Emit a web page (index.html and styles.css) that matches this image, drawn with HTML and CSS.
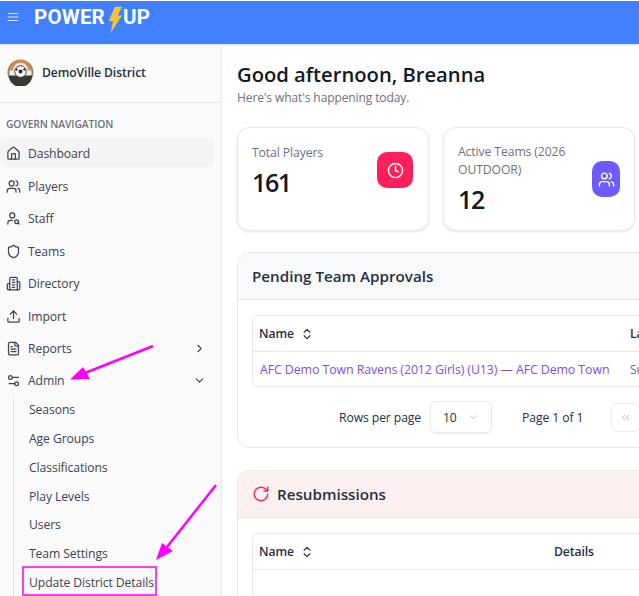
FILE: index.html
```html
<!DOCTYPE html>
<html>
<head>
  <link rel="stylesheet" href="styles.css">
</head>

<body>
  <svg width="0" height="0" class="defs">
    <symbol id="i-house" viewBox="0 0 24 24"><path d="M15 21v-8a1 1 0 0 0-1-1h-4a1 1 0 0 0-1 1v8"/><path d="M3 10a2 2 0 0 1 .709-1.528l7-5.999a2 2 0 0 1 2.582 0l7 5.999A2 2 0 0 1 21 10v9a2 2 0 0 1-2 2H5a2 2 0 0 1-2-2z"/></symbol>
    <symbol id="i-users" viewBox="0 0 24 24"><path d="M16 21v-2a4 4 0 0 0-4-4H6a4 4 0 0 0-4 4v2"/><circle cx="9" cy="7" r="4"/><path d="M22 21v-2a4 4 0 0 0-3-3.87"/><path d="M16 3.13a4 4 0 0 1 0 7.75"/></symbol>
    <symbol id="i-staff" viewBox="0 0 24 24"><circle cx="10" cy="7" r="4"/><path d="M10.3 15H7a4 4 0 0 0-4 4v2"/><circle cx="17" cy="17" r="3"/><path d="m21 21-1.9-1.9"/></symbol>
    <symbol id="i-shield" viewBox="0 0 24 24"><path d="M20 13c0 5-3.5 7.5-7.66 8.95a1 1 0 0 1-.67-.01C7.5 20.5 4 18 4 13V6a1 1 0 0 1 1-1c2 0 4.5-1.2 6.24-2.72a1.17 1.17 0 0 1 1.52 0C14.51 3.81 17 5 19 5a1 1 0 0 1 1 1z"/></symbol>
    <symbol id="i-building" viewBox="0 0 24 24"><path d="M6 22V4a2 2 0 0 1 2-2h8a2 2 0 0 1 2 2v18Z"/><path d="M6 12H4a2 2 0 0 0-2 2v6a2 2 0 0 0 2 2h2"/><path d="M18 9h2a2 2 0 0 1 2 2v9a2 2 0 0 1-2 2h-2"/><path d="M10 6h4"/><path d="M10 10h4"/><path d="M10 14h4"/><path d="M10 18h4"/></symbol>
    <symbol id="i-upload" viewBox="0 0 24 24"><path d="M21 15v4a2 2 0 0 1-2 2H5a2 2 0 0 1-2-2v-4"/><polyline points="17 8 12 3 7 8"/><line x1="12" x2="12" y1="3" y2="15"/></symbol>
    <symbol id="i-file" viewBox="0 0 24 24"><path d="M15 2H6a2 2 0 0 0-2 2v16a2 2 0 0 0 2 2h12a2 2 0 0 0 2-2V7Z"/><path d="M14 2v4a2 2 0 0 0 2 2h4"/><path d="M10 9H8"/><path d="M16 13H8"/><path d="M16 17H8"/></symbol>
    <symbol id="i-settings" viewBox="0 0 24 24"><path d="M20 7h-9"/><path d="M14 17H5"/><circle cx="17" cy="17" r="3"/><circle cx="7" cy="7" r="3"/></symbol>
    <symbol id="i-sort" viewBox="0 0 24 24"><path d="m7 15 5 5 5-5"/><path d="m7 9 5-5 5 5"/></symbol>
  </svg>

  <header class="topbar">
    <svg class="menu-icon" viewBox="0 0 24 24"><path d="M3 6h18M3 12h18M3 18h18"/></svg>
    <div class="logo">
      <span>POWER</span>
      <svg class="bolt" viewBox="0 0 18 30"><path d="M10 0h8l-5 10h5L5 30l3-14H3z"/></svg>
      <span>UP</span>
    </div>
  </header>

  <div class="layout">
    <aside class="sidebar">
      <div class="district">
        <svg class="crest" viewBox="0 0 28 28">
          <circle cx="14" cy="14" r="13.5" fill="#8a8782"/>
          <circle cx="14" cy="14" r="11.5" fill="#f1efe9"/>
          <path d="M3 12a11 11 0 0 1 22 0h-3a8 8 0 0 0-16 0z" fill="#e08a3c"/>
          <path d="M2 17h24a12 12 0 0 1-24 0z" fill="#3a3835"/>
          <circle cx="14" cy="13" r="6" fill="#f7f7f5" stroke="#45423f"/>
          <circle cx="14" cy="13" r="2" fill="#2a2a2a"/>
          <circle cx="10" cy="11" r="1.2" fill="#2a2a2a"/>
          <circle cx="18" cy="11" r="1.2" fill="#2a2a2a"/>
        </svg>
        <span>DemoVille District</span>
      </div>

      <div class="nav-title">GOVERN NAVIGATION</div>
      <nav class="nav">
        <a class="nav-item active"><svg class="icon"><use href="#i-house"/></svg>Dashboard</a>
        <a class="nav-item"><svg class="icon"><use href="#i-users"/></svg>Players</a>
        <a class="nav-item"><svg class="icon"><use href="#i-staff"/></svg>Staff</a>
        <a class="nav-item"><svg class="icon"><use href="#i-shield"/></svg>Teams</a>
        <a class="nav-item"><svg class="icon"><use href="#i-building"/></svg>Directory</a>
        <a class="nav-item"><svg class="icon"><use href="#i-upload"/></svg>Import</a>
        <a class="nav-item"><svg class="icon"><use href="#i-file"/></svg>Reports
          <svg class="caret" viewBox="0 0 24 24"><path d="m9 18 6-6-6-6"/></svg></a>
        <a class="nav-item"><svg class="icon"><use href="#i-settings"/></svg>Admin
          <svg class="caret" viewBox="0 0 24 24"><path d="m6 9 6 6 6-6"/></svg></a>
      </nav>
      <div class="subnav">
        <a>Seasons</a>
        <a>Age Groups</a>
        <a>Classifications</a>
        <a>Play Levels</a>
        <a>Users</a>
        <a>Team Settings</a>
        <a>Update District Details</a>
      </div>
    </aside>

    <main class="main">
      <h1>Good afternoon, Breanna</h1>
      <p class="lead">Here's what's happening today.</p>

      <div class="stats">
        <div class="stat">
          <div class="stat-text">
            <div class="stat-label">Total Players</div>
            <div class="stat-value">161</div>
          </div>
          <div class="stat-icon red">
            <svg viewBox="0 0 24 24"><circle cx="12" cy="12" r="10"/><polyline points="12 6 12 12 16 14"/></svg>
          </div>
        </div>
        <div class="stat center">
          <div class="stat-text">
            <div class="stat-label">Active Teams (2026 OUTDOOR)</div>
            <div class="stat-value">12</div>
          </div>
          <div class="stat-icon violet">
            <svg viewBox="0 0 24 24"><use href="#i-users"/></svg>
          </div>
        </div>
      </div>

      <section class="panel">
        <div class="panel-head">Pending Team Approvals</div>
        <div class="panel-body">
          <div class="table">
            <div class="row head">
              <div class="col-approve">Name <svg class="sort"><use href="#i-sort"/></svg></div>
              <div>Last Updated</div>
            </div>
            <div class="row">
              <div class="col-approve"><a class="team-link">AFC Demo Town Ravens (2012 Girls) (U13) — AFC Demo Town</a></div>
              <div class="muted">Submitted</div>
            </div>
          </div>
          <div class="pager">
            <span class="rows-label">Rows per page</span>
            <div class="select">10 <svg viewBox="0 0 24 24"><path d="m6 9 6 6 6-6"/></svg></div>
            <span class="page-no">Page 1 of 1</span>
            <div class="page-btn"><svg viewBox="0 0 24 24"><path d="m11 17-5-5 5-5"/><path d="m18 17-5-5 5-5"/></svg></div>
          </div>
        </div>
      </section>

      <section class="panel">
        <div class="panel-head pink">
          <svg viewBox="0 0 24 24"><path d="M21 12a9 9 0 1 1-9-9c2.52 0 4.93 1 6.74 2.74L21 8"/><path d="M21 3v5h-5"/></svg>
          Resubmissions
        </div>
        <div class="panel-body">
          <div class="table">
            <div class="row head">
              <div class="col-resub">Name <svg class="sort"><use href="#i-sort"/></svg></div>
              <div>Details</div>
            </div>
            <div class="row empty"></div>
          </div>
        </div>
      </section>
    </main>
  </div>

  <!-- markup drawn on top of the screenshot -->
  <div class="callout-box"></div>
  <svg class="callouts" viewBox="0 0 639 596">
    <path class="shaft" d="M153 346 85 373"/>
    <path class="head" d="M70 379.500 90 379 83 367z"/>
    <path class="shaft" d="M216 485 167 547"/>
    <path class="head" d="M156 560 162 543 173 551z"/>
  </svg>
</body>
</html>
```

FILE: styles.css
```css
* {
  box-sizing: border-box;
}

html, body {
  height: 100%;
}

body {
  margin: 0;
  overflow: hidden;
  display: flex;
  flex-direction: column;
  background: #fff;
  color: #1f2937;
  font-family: "Open Sans", "Noto Sans", sans-serif;
  font-size: 12.2px;
  letter-spacing: -0.1px;
}

.defs {
  position: absolute;
}

symbol {
  overflow: visible;
}

/* top bar */
.topbar {
  height: 43px;
  flex-shrink: 0;
  margin: 1px 0 1px;
  padding-bottom: 11px;
  display: flex;
  align-items: center;
  background: #4080ff;
  box-shadow: 0 1px 0 #d9e6ff;
}

.menu-icon {
  width: 14px;
  height: 14px;
  margin-left: 6px;
  fill: none;
  stroke: #dfe9ff;
  stroke-width: 2;
}

.logo {
  margin-left: 14px;
  display: flex;
  align-items: center;
  color: #fff;
  font-family: "Roboto", sans-serif;
  font-size: 20.5px;
  font-weight: 700;
  letter-spacing: 0.2px;
}

.bolt {
  width: 16px;
  height: 28px;
  margin: 6px 1px 0 1px;
  fill: #f4c430;
}

/* sidebar */
.layout {
  flex: 1;
  display: flex;
  min-height: 0;
}

.sidebar {
  width: 222px;
  flex-shrink: 0;
  background: #fafafa;
  border-right: 1px solid #e7e7e7;
  overflow: hidden;
}

.district {
  height: 58px;
  padding: 0 0 2px 7px;
  display: flex;
  align-items: center;
  gap: 8px;
  border-bottom: 1px solid #e8e8e8;
  color: #27303f;
  font-size: 12.2px;
  font-weight: 600;
}

.crest {
  width: 27px;
  height: 27px;
}

.nav-title {
  margin: 14px 0 6px 6px;
  color: #6b7280;
  font-size: 10.3px;
  font-weight: 600;
  line-height: 15px;
}

.nav-item {
  height: 32.4px;
  padding: 0 8px 0 6px;
  margin-right: 7px;
  display: flex;
  align-items: center;
  gap: 7px;
  color: #3c4452;
  border-radius: 6px;
}

.nav-item.active {
  height: 29px;
  margin-bottom: 3.4px;
  padding-top: 1px;
  background: #f4f4f4;
}

.icon {
  width: 15px;
  height: 15px;
  fill: none;
  stroke: #3c4452;
  stroke-width: 2;
  stroke-linecap: round;
  stroke-linejoin: round;
}

.caret {
  width: 13px;
  height: 13px;
  margin-left: auto;
  fill: none;
  stroke: #3c4452;
  stroke-width: 2;
  stroke-linecap: round;
  stroke-linejoin: round;
}

.subnav {
  margin: 0 0 0 13px;
  padding: 0 0 0 15px;
  border-left: 1px solid #e2e2e2;
}

.subnav a {
  display: block;
  height: 28.8px;
  line-height: 26px;
  color: #3c4452;
  white-space: nowrap;
}

/* main column */
.main {
  flex: 1;
  min-width: 0;
  padding: 15px 0 0 15px;
  overflow: hidden;
}

h1 {
  margin: 0;
  padding-bottom: 1px;
  color: #111827;
  font-size: 20.2px;
  font-weight: 600;
  letter-spacing: 0;
  line-height: 28px;
}

.lead {
  margin: 0;
  padding-bottom: 1px;
  color: #6b7280;
  font-size: 12px;
  line-height: 17px;
}

.stats {
  margin-top: 20px;
  display: grid;
  grid-template-columns: 192px 192px;
  gap: 14px;
}

.stat {
  height: 104px;
  padding: 16px 14px 14px;
  display: flex;
  justify-content: space-between;
  background: #fff;
  border: 1px solid #e8e8e8;
  border-radius: 13px;
  box-shadow: 0 1px 3px rgba(0, 0, 0, 0.1);
}

.stat.center {
  align-items: center;
  padding-top: 0;
  padding-bottom: 0;
}

.stat-label {
  color: #6b7280;
  line-height: 18px;
}

.stat-value {
  margin-top: 3px;
  color: #111827;
  font-size: 25px;
  font-weight: 600;
  letter-spacing: -1.4px;
  line-height: 34px;
}

.stat-icon {
  flex-shrink: 0;
  display: flex;
  align-items: center;
  justify-content: center;
}

.stat-icon svg {
  width: 17px;
  height: 17px;
  fill: none;
  stroke: #fff;
  stroke-width: 2;
  stroke-linecap: round;
  stroke-linejoin: round;
}

.stat-icon.red {
  width: 36px;
  height: 36px;
  margin: 8px 1px 0 0;
  background: #ff1f5a;
  border-radius: 10px;
}

.stat-icon.violet {
  width: 28px;
  height: 36px;
  background: #6c5cff;
  border-radius: 10px;
}

.panel {
  width: 460px;
  margin-top: 21px;
  background: #fff;
  border: 1px solid #e8e8e8;
  border-radius: 13px;
  overflow: hidden;
}

.panel + .panel {
  margin-top: 22px;
}

.panel-head {
  height: 47px;
  padding-left: 14px;
  display: flex;
  align-items: center;
  gap: 7px;
  background: #f8f9fb;
  border-bottom: 1px solid #e8e8e8;
  color: #27303f;
  font-size: 15.2px;
  font-weight: 600;
  letter-spacing: 0;
}

.panel-head.pink {
  background: #fdf0f0;
}

.panel-head svg {
  width: 18px;
  height: 18px;
  fill: none;
  stroke: #f0315f;
  stroke-width: 2;
  stroke-linecap: round;
  stroke-linejoin: round;
}

.panel-body {
  padding: 15px 0 0 14px;
}

.table {
  background: #fff;
  border: 1px solid #e8e8e8;
  border-radius: 6px;
}

.row {
  height: 34px;
  display: flex;
  align-items: center;
  white-space: nowrap;
}

.row.head {
  height: 36px;
  border-bottom: 1px solid #e8e8e8;
  color: #27303f;
  font-weight: 600;
}

.row.empty {
  height: 40px;
}

.col-approve, .col-resub {
  padding-left: 6px;
  flex-shrink: 0;
  display: flex;
  align-items: center;
  gap: 6px;
}

.col-approve {
  width: 377px;
}

.col-resub {
  width: 301px;
}

.sort {
  width: 14px;
  height: 14px;
  fill: none;
  stroke: #27303f;
  stroke-width: 2;
  stroke-linecap: round;
  stroke-linejoin: round;
}

.team-link {
  padding-left: 1px;
  color: #7c4df0;
  font-size: 12.4px;
  font-weight: 500;
}

.muted {
  color: #6b7280;
}

.pager {
  height: 60px;
  padding-left: 87px;
  display: flex;
  align-items: center;
  color: #27303f;
  font-weight: 500;
  white-space: nowrap;
}

.rows-label {
  width: 84px;
  flex-shrink: 0;
}

.select {
  width: 62px;
  height: 32px;
  margin-left: 7px;
  padding: 0 12px;
  flex-shrink: 0;
  display: flex;
  align-items: center;
  justify-content: space-between;
  border: 1px solid #e8e8e8;
  border-radius: 6px;
  box-shadow: 0 1px 2px rgba(0, 0, 0, 0.08);
  font-weight: 400;
}

.select svg {
  width: 12px;
  height: 12px;
  fill: none;
  stroke: #9ca3af;
  stroke-width: 1.5;
}

.page-no {
  width: 60px;
  margin-left: 30px;
  flex-shrink: 0;
}

.page-btn {
  width: 29px;
  height: 29px;
  margin-left: 29px;
  flex-shrink: 0;
  display: flex;
  align-items: center;
  justify-content: center;
  border: 1px solid #ececec;
  border-radius: 6px;
}

.page-btn svg {
  width: 13px;
  height: 13px;
  fill: none;
  stroke: #9ca3af;
  stroke-width: 1.5;
}

/* annotation layer */
.callouts {
  position: absolute;
  left: 0;
  top: 0;
  width: 639px;
  height: 596px;
  pointer-events: none;
}

.shaft {
  fill: none;
  stroke: #ff00ff;
  stroke-width: 2.5;
}

.head {
  fill: #ff00ff;
}

.callout-box {
  position: absolute;
  left: 22px;
  top: 566px;
  width: 135px;
  height: 30px;
  border: 2px solid #ff3df0;
}
```
